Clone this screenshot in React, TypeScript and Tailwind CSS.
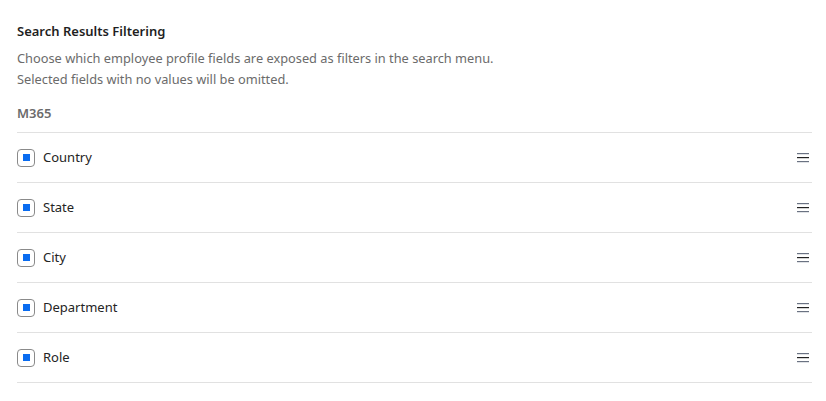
const fields = ["Country", "State", "City", "Department", "Role"];

function DragHandle() {
  return (
    <svg width="12" height="11" viewBox="0 0 12 11" className="text-gray-500">
      <rect x="0" y="1" width="12" height="1.2" fill="currentColor" />
      <rect x="0" y="5" width="12" height="1.2" fill="#222" />
      <rect x="0" y="9" width="12" height="1.2" fill="currentColor" />
    </svg>
  );
}

function FieldRow({ label }: { label: string }) {
  return (
    <div className="flex h-[50px] items-center justify-between border-b border-[#e1e1e1]">
      <div className="flex items-center gap-[8px]">
        <div className="flex h-[18px] w-[18px] items-center justify-center rounded-[4px] border border-[#8a8a8a]">
          <div className="h-[7px] w-[7px] bg-[#0a6cf0]" />
        </div>
        <span className="text-[13px] text-[#242424]">{label}</span>
      </div>
      <div className="pr-[3px]">
        <DragHandle />
      </div>
    </div>
  );
}

export default function App() {
  return (
    <div
      className="min-h-[401px] bg-white pl-[17px] pr-[14px] pt-[22px]"
      style={{ fontFamily: '"Noto Sans", "Open Sans", sans-serif' }}
    >
      <h2 className="text-[13px] font-semibold leading-[18px] text-[#1f1f1f]">
        Search Results Filtering
      </h2>
      <p className="mt-[8px] text-[12.8px] leading-[21px] text-[#6b6b6b]">
        Choose which employee profile fields are exposed as filters in the search menu.
        <br />
        Selected fields with no values will be omitted.
      </p>
      <div className="mt-[14px] pb-[10px] text-[13px] font-semibold leading-[18px] text-[#6b6b6b]">
        M365
      </div>
      <div className="border-t border-[#e1e1e1]">
        {fields.map((f) => (
          <FieldRow key={f} label={f} />
        ))}
      </div>
    </div>
  );
}
